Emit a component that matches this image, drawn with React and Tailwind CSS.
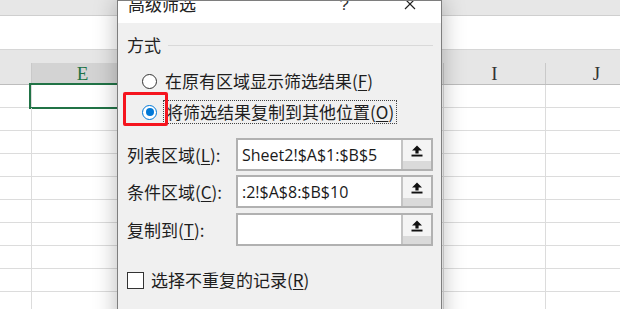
import React from "react";

const cjk = "font-['Noto_Sans_CJK_SC',sans-serif]";

// column widths of the sheet behind the dialog
const cols = [
  { w: "w-[32px]", label: "" },
  { w: "w-[102px]", label: "E", active: true },
  { w: "w-[102px]", label: "F" },
  { w: "w-[102px]", label: "G" },
  { w: "w-[106px]", label: "H" },
  { w: "w-[102px]", label: "I" },
  { w: "w-[102px]", label: "J" },
];

const UpIcon = () => (
  <svg width="12" height="12" viewBox="0 0 12 12">
    <path d="M6 0.5 L11 5.5 L7.6 5.5 L7.6 8.4 L4.4 8.4 L4.4 5.5 L1 5.5 Z" fill="#111" />
    <rect x="0.5" y="9.6" width="11" height="1.9" fill="#111" />
  </svg>
);

const Key = ({ children }) => <span className="underline underline-offset-2">{children}</span>;

const RangeRow = ({ label, k, value, className }) => (
  <div className={`flex items-center ${className}`}>
    <span className="w-[109px] text-[17px] leading-[20px] text-[#1e1e1e]">
      {label}(<Key>{k}</Key>):
    </span>
    <div className="flex w-[197px] h-[33px] border-2 border-[#b1b1b1] bg-white">
      <div className="flex-1 flex items-center pl-[4px] font-['Open_Sans',sans-serif] text-[16px] text-[#1a1a1a] overflow-hidden whitespace-nowrap">
        {value}
      </div>
      <div className="w-[30px] flex flex-col border-l-2 border-[#c4c4c4] bg-[#dadada]">
        <div className="h-[21px] bg-[#f4f4f4] flex items-center justify-center">
          <UpIcon />
        </div>
      </div>
    </div>
  </div>
);

function Sheet() {
  return (
    <div className="flex flex-col w-[620px]">
      <div className="h-[16px] bg-[#e7e7e7] border-b border-[#cfcfcf]" />
      <div className="h-[34px] bg-white border-b border-[#d6d6d6]" />
      <div className="h-[13px] bg-[#e6e6e6]" />
      <div className="flex h-[22px] bg-[#e6e6e6] border-b border-[#bdbdbd] font-['Liberation_Serif',serif] text-[19px] leading-[20px]">
        {cols.map((c, i) => (
          <div
            key={i}
            className={`${c.w} shrink-0 flex items-end justify-center border-r border-[#c9c9c9] ${
              c.active ? "bg-[#d3d3d3] text-[#217346]" : "text-[#333]"
            }`}
          >
            {c.label}
          </div>
        ))}
      </div>
      {Array.from({ length: 10 }).map((_, r) => (
        <div key={r} className="flex h-[23px] bg-white border-b border-[#dcdcdc]">
          {cols.map((c, i) => (
            <div key={i} className={`${c.w} shrink-0 border-r border-[#dcdcdc] relative`}>
              {r === 0 && c.active && (
                <div className="absolute -left-[3px] -top-[2px] -right-[2px] -bottom-[2px] border-[2.5px] border-[#217346]" />
              )}
            </div>
          ))}
        </div>
      ))}
    </div>
  );
}

function Dialog() {
  return (
    <div className={`absolute left-[117px] top-0 w-[325px] h-[340px] border border-[#7e7e7e] bg-[#f0f0f0] shadow-[0_0_22px_rgba(0,0,0,0.28)] ${cjk}`}>
      {/* title bar, scrolled half out of view */}
      <div className="h-[22px] bg-white flex items-start overflow-hidden">
        <span className="ml-[10px] -mt-[6px] text-[17px] leading-[17px] text-[#222]">高级筛选</span>
        <span className="ml-auto -mt-[5px] text-[17px] leading-[17px] text-[#333] font-['Liberation_Sans',sans-serif]">?</span>
        <svg className="ml-[55px] mr-[25px] -mt-[3px]" width="12" height="12" viewBox="0 0 12 12">
          <path d="M1 1 L11 11 M11 1 L1 11" stroke="#222" strokeWidth="1.2" />
        </svg>
      </div>

      <div className="pl-[9px] pr-[8px]">
        <div className="mt-[12px] flex items-center h-[20px]">
          <span className="text-[17px] leading-[20px] text-[#222]">方式</span>
          <div className="flex-1 ml-[7px] h-px bg-[#d9d9d9]" />
        </div>

        <div className="mt-[16px] flex items-center h-[20px] pl-[15px]">
          <span className="w-[15px] h-[15px] rounded-full border-[1.5px] border-[#333] bg-white" />
          <span className="ml-[8px] text-[17px] leading-[20px] text-[#1e1e1e]">
            在原有区域显示筛选结果(<Key>F</Key>)
          </span>
        </div>

        <div className="mt-[9px] flex items-center h-[24px] pl-[15px]">
          <span className="w-[15px] h-[15px] rounded-full border-[1.5px] border-[#0078d7] bg-white flex items-center justify-center">
            <span className="w-[8px] h-[8px] rounded-full bg-[#0078d7]" />
          </span>
          <span className="ml-[6px] h-[24px] px-[2px] flex items-center border border-dotted border-[#444] text-[17px] leading-[20px] text-[#1e1e1e]">
            将筛选结果复制到其他位置(<Key>O</Key>)
          </span>
        </div>

        <RangeRow className="mt-[14px]" label="列表区域" k="L" value="Sheet2!$A$1:$B$5" />
        <RangeRow className="mt-[4px]" label="条件区域" k="C" value=":2!$A$8:$B$10" />
        <RangeRow className="mt-[5px]" label="复制到" k="T" value="" />

        <div className="mt-[25px] flex items-center h-[18px]">
          <span className="w-[17px] h-[17px] border-[1.5px] border-[#333] bg-white" />
          <span className="ml-[7px] text-[17px] leading-[20px] text-[#1e1e1e]">
            选择不重复的记录(<Key>R</Key>)
          </span>
        </div>
      </div>

      {/* red highlight around the selected option */}
      <div className="absolute left-[5px] top-[91px] w-[45px] h-[34px] border-[3px] border-[#f5141e] rounded-[2px]" />
    </div>
  );
}

export default function App() {
  return (
    <div className="relative w-[620px] h-[309px] overflow-hidden bg-white">
      <Sheet />
      <Dialog />
    </div>
  );
}
